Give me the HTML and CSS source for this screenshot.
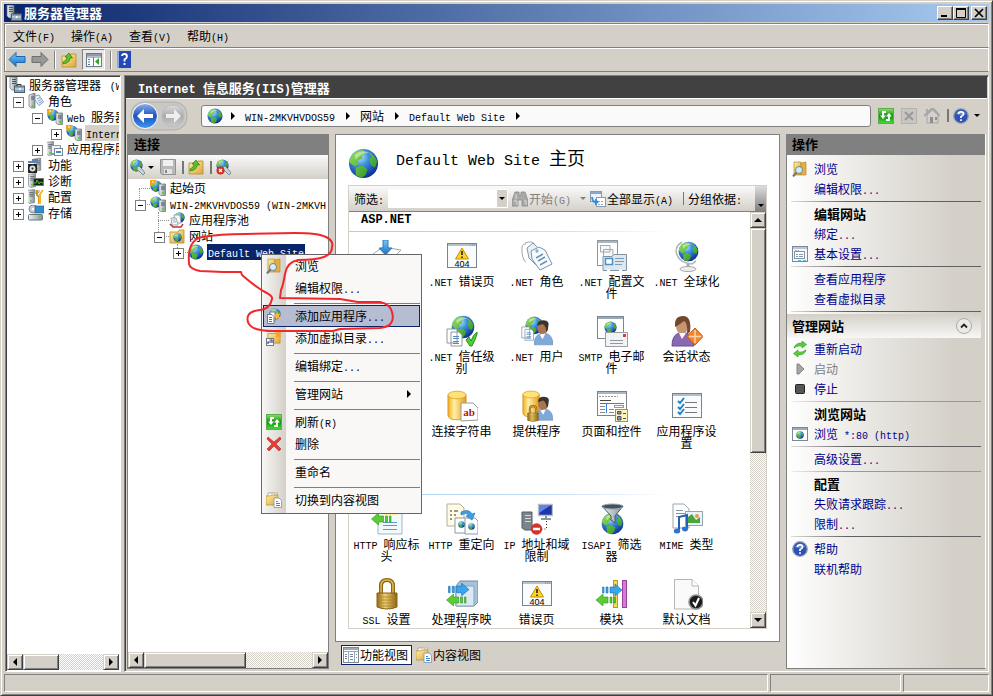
FILE: index.html
```html
<!DOCTYPE html>
<html lang="zh-CN">
<head>
<meta charset="utf-8">
<title>服务器管理器</title>
<link rel="stylesheet" href="styles.css">
</head>
<body>
<svg class="defs" aria-hidden="true">
  <defs>
    <radialGradient id="sea" cx=".38" cy=".28" r=".75"><stop offset="0" stop-color="#b4e6fb"/><stop offset=".4" stop-color="#3b8fe0"/><stop offset="1" stop-color="#0c2a8e"/></radialGradient>
    <linearGradient id="land" x1="0" y1="0" x2="1" y2="1"><stop offset="0" stop-color="#9be25a"/><stop offset="1" stop-color="#1f8a1c"/></linearGradient>
    <linearGradient id="gold" x1="0" x2="1"><stop offset="0" stop-color="#f2ae1c"/><stop offset=".35" stop-color="#fff0a8"/><stop offset="1" stop-color="#e69a10"/></linearGradient>
    <linearGradient id="brass" x1="0" x2="1"><stop offset="0" stop-color="#8d6512"/><stop offset=".4" stop-color="#f0d070"/><stop offset="1" stop-color="#8a6010"/></linearGradient>
    <linearGradient id="steel" x1="0" x2="1"><stop offset="0" stop-color="#f0f3f5"/><stop offset="1" stop-color="#87919b"/></linearGradient>
    <linearGradient id="fold" x1="0" y1="0" x2="1" y2="1"><stop offset="0" stop-color="#fff0a5"/><stop offset="1" stop-color="#dba63c"/></linearGradient>
    <linearGradient id="blue" x1="0" y1="0" x2="0" y2="1"><stop offset="0" stop-color="#7cc8f6"/><stop offset="1" stop-color="#1470c4"/></linearGradient>
    <linearGradient id="ball" x1="0" y1="0" x2="0" y2="1"><stop offset="0" stop-color="#8ab4ee"/><stop offset=".5" stop-color="#2350b8"/><stop offset="1" stop-color="#3d9bf0"/></linearGradient>
    <linearGradient id="ballg" x1="0" y1="0" x2="0" y2="1"><stop offset="0" stop-color="#ddd"/><stop offset=".5" stop-color="#aaa"/><stop offset="1" stop-color="#ccc"/></linearGradient>
    <linearGradient id="grn" x1="0" y1="0" x2="0" y2="1"><stop offset="0" stop-color="#8fe06a"/><stop offset=".5" stop-color="#109010"/><stop offset="1" stop-color="#45e03a"/></linearGradient>

    <symbol id="globe" viewBox="0 0 32 32"><circle cx="16" cy="16" r="15" fill="url(#sea)"/><path d="M3 9Q7 2 15 2L18 5 14 8 15 11 10 13 11 17 7 19 3 16 1 14ZM21 4Q28 7 30 14L28 20 24 18 22 12 24 9ZM8 20L15 18 20 22 18 28 14 31 8 28Z" fill="url(#land)"/><path d="M7 7Q14 1 22 5 14 5 8 12Z" fill="#fff" opacity=".45"/></symbol>
    <symbol id="server" viewBox="0 0 16 16"><path d="M4 1L12 0V15L6 16 4 14Z" fill="url(#steel)" stroke="#68727a" stroke-width=".7"/><path d="M6 3.500H11M6 5.500H11M6 7.500H11" stroke="#5b656d"/><rect x="7" y="12" width="2" height="2" fill="#52d42b"/></symbol>
    <symbol id="srvmgr" viewBox="0 0 16 16"><path d="M1 0H8V13H3L1 11Z" fill="url(#steel)" stroke="#68727a" stroke-width=".7"/><path d="M3 2.500H7M3 4.500H7M3 6.500H7" stroke="#4b555d"/><path d="M8 9V7.500H12V9" fill="none" stroke="#333"/><rect x="5.500" y="9" width="10" height="6.500" fill="#8ba2b8" stroke="#4a5f74"/><path d="M6 12H15" stroke="#dde6ee"/><rect x="10" y="11" width="1.500" height="2" fill="#fff"/></symbol>
    <symbol id="role" viewBox="0 0 16 16"><path d="M1 2L7 0V15H3L1 13Z" fill="url(#steel)" stroke="#68727a" stroke-width=".7"/><path d="M3 4H6M3 6H6" stroke="#4b555d"/><rect x="3.500" y="12" width="2" height="2" fill="#52d42b"/><path d="M7 3L11 2 15.500 9 11 12.500 7 7Z" fill="#eaf4fc" stroke="#6c8eaa" stroke-width=".8"/><path d="M9 6L12 4.500M10 8L13 6.500M11 10L14 8.500" stroke="#5b90ba" stroke-width=".8"/></symbol>
    <symbol id="srvglobe" viewBox="0 0 16 16"><use href="#globe" width="12" height="12"/><path d="M9 4H15.500V15.500H11L9 14Z" fill="url(#steel)" stroke="#68727a" stroke-width=".7"/><path d="M11 7H14.500M11 9H14.500" stroke="#4b555d"/><rect x="12" y="12" width="2" height="2" fill="#52d42b"/></symbol>
    <symbol id="websrv" viewBox="0 0 16 16"><use href="#srvglobe" width="16" height="16"/><path d="M0 0H6L5 3 2 5H0Z" fill="#f3a21a"/><path d="M2 2H4" stroke="#fff"/></symbol>
    <symbol id="appsrv" viewBox="0 0 16 16"><use href="#server" x="-4" width="14" height="15"/><rect x="4.500" y="4.500" width="9" height="8" fill="#edf3f8" stroke="#8a98a6"/><rect x="7.500" y="7.500" width="8" height="7" fill="#fff" stroke="#7a8896"/><path d="M9 11H14" stroke="#3b8bd6" stroke-width="2"/></symbol>
    <symbol id="feature" viewBox="0 0 16 16"><use href="#server" x="3" width="13" height="15"/><path d="M0 5H9V3H4" fill="none" stroke="#6482b0" stroke-width="2"/><rect y="7" width="9" height="9" fill="#222"/><circle cx="4.500" cy="11.500" r="3" fill="#ddd"/><circle cx="4.500" cy="11.500" r="1" fill="#222"/></symbol>
    <symbol id="diag" viewBox="0 0 16 16"><use href="#server" x="-3" width="14" height="15"/><rect x="5.500" y="5.500" width="10" height="7" fill="#182418" stroke="#777"/><path d="M6 10H8L9 7 11 11 12 9 15 10" stroke="#5fd64c" fill="none" stroke-width=".8"/></symbol>
    <symbol id="config" viewBox="0 0 16 16"><use href="#server" x="-4" width="14" height="15"/><path d="M9 1V6L11 8V15" stroke="#d69a17" stroke-width="2" fill="none"/><path d="M15 1L12 5V15" stroke="#f0b92e" stroke-width="2" fill="none"/><path d="M7 1V4L9 5 11 3V1" stroke="#8894a0" fill="none"/></symbol>
    <symbol id="storage" viewBox="0 0 16 16"><circle cx="5" cy="4" r="4" fill="#c8ced6" stroke="#7f8992"/><circle cx="5" cy="4" r="1.300" fill="#fff"/><rect x="7" y="1" width="9" height="7" fill="#2d8fce" stroke="#46607c" stroke-width=".7"/><rect x=".5" y="9.500" width="14" height="5.500" rx="1" fill="url(#steel)" stroke="#6b747c"/><rect x="11" y="11" width="2" height="2" fill="#52d42b"/></symbol>
    <symbol id="folder" viewBox="0 0 16 16"><path d="M1 4H9L10 2H15V15H1Z" fill="url(#fold)" stroke="#b98b2b" stroke-width=".8"/></symbol>
    <symbol id="upfolder" viewBox="0 0 16 16"><use href="#folder" width="16" height="16"/><path d="M2 12Q9 11 9 6H11.500L8 1 4 5H6Q6 9 2 10Z" fill="#59c22c" stroke="#2d7c14" stroke-width=".7"/></symbol>
    <symbol id="sites" viewBox="0 0 16 16"><use href="#folder" width="16" height="16"/><use href="#globe" x="4" y="5" width="9" height="9"/></symbol>
    <symbol id="pool" viewBox="0 0 16 16"><use href="#globe" x="5" width="11" height="11"/><path d="M5 3H11L12 11H6Z" fill="#f7fbff" stroke="#8693a0" stroke-width=".8"/><path d="M2 6H7L9 13H3Z" fill="#f7fbff" stroke="#8693a0" stroke-width=".8"/><path d="M3.500 8H6.500M4 10H7" stroke="#8693a0" stroke-width=".8"/><path d="M1 12L4 15H12L14 12" stroke="#b73a33" stroke-width="1.500" fill="none"/></symbol>
    <symbol id="connect" viewBox="0 0 16 16"><use href="#globe" width="13" height="13"/><path d="M7 8Q6 12 9 12L13 16 15 14 12 10 9 7Z" fill="#c8d4dc" stroke="#687a86" stroke-width=".8"/></symbol>
    <symbol id="disconnect" viewBox="0 0 16 16"><use href="#connect" width="16" height="16"/><circle cx="4.500" cy="11.500" r="4" fill="#d42b25"/><path d="M3 10L6 13M6 10L3 13" stroke="#fff" stroke-width="1.200"/></symbol>
    <symbol id="save" viewBox="0 0 16 16"><path d="M.5 .5H15.500V15.500H2L.5 14Z" fill="#b9b9b9" stroke="#929292"/><rect x="3" y="1" width="10" height="6" fill="#efefef"/><rect x="4" y="10" width="8" height="5" fill="#e2e2e2"/><path d="M6 11V14" stroke="#888" stroke-width="2"/></symbol>
    <symbol id="back" viewBox="0 0 18 16"><path d="M1 8L8 1V5H17V11H8V15Z" fill="url(#blue)" stroke="#1a68b0"/></symbol>
    <symbol id="next" viewBox="0 0 18 16"><path d="M17 8L10 1V5H1V11H10V15Z" fill="#989898" stroke="#6f6f6f"/></symbol>
    <symbol id="pane" viewBox="0 0 16 14"><rect x=".5" y=".5" width="15" height="13" fill="#fff" stroke="#6e7a8c"/><path d="M1 2H15" stroke="#8d9ab0" stroke-width="2"/><path d="M1 4H15M7.500 4V13" stroke="#6e7a8c"/><path d="M2 6.500H4M2 9H4M2 11.500H4" stroke="#3d7bc8"/><path d="M13 5V12L9 8.500Z" fill="#2ea328"/></symbol>
    <symbol id="book" viewBox="0 0 14 17"><path d="M0 0H14V17H0Z" fill="#2348b8"/><path d="M0 0H2V17H0Z" fill="#8aa6e4"/><path d="M5 5Q5 3 7.500 3T10 5.500Q10 7 7.500 8.500V10.500M7.500 12V14" stroke="#fff" stroke-width="1.800" fill="none"/></symbol>
    <symbol id="refresh" viewBox="0 0 16 16"><rect x=".5" y=".5" width="15" height="15" fill="url(#grn)" stroke="#5cae4d"/><path d="M8 4H5V8M8 12H11V8" stroke="#fff" stroke-width="1.800" fill="none"/><path d="M2 7.500H8L5 11ZM8 8.500H14L11 5Z" fill="#fff"/></symbol>
    <symbol id="stop" viewBox="0 0 16 16"><rect x=".5" y=".5" width="15" height="15" fill="#c7c6c2" stroke="#b4b2ad"/><path d="M4 4L12 12M12 4L4 12" stroke="#999" stroke-width="2"/></symbol>
    <symbol id="home" viewBox="0 0 16 16"><path d="M3 7V15H14V7L8.500 2Z" fill="#d3d1cd" stroke="#a5a5a5"/><path d="M0 8L8.500 0 16 8" stroke="#a6a6a6" stroke-width="2" fill="none"/><path d="M3 1V5" stroke="#aaa" stroke-width="2"/><path d="M6 9H9V15H6ZM11 9H13V12H11Z" fill="#8e8e8e"/></symbol>
    <symbol id="help" viewBox="0 0 16 16"><circle cx="8" cy="8" r="7.300" fill="#2d52b4" stroke="#9aa3b3" stroke-width="1.300"/><path d="M2.500 6Q8-1 13.500 6 8 8 2.500 6Z" fill="#88aaee" opacity=".6"/><path d="M5.500 6Q5.500 3.800 8 3.800T10.500 6Q10.500 7.500 8 8.500V10M8 11.200V13" stroke="#fff" stroke-width="1.700" fill="none"/></symbol>
    <symbol id="browse" viewBox="0 0 16 16"><path d="M2 1H9V14H2Z" fill="url(#fold)" stroke="#b98b2b" stroke-width=".7"/><path d="M9 2L14 1V14H9Z" fill="#e3b03d" stroke="#b98b2b" stroke-width=".7"/><circle cx="7" cy="9" r="3.500" fill="#d5ecfa" stroke="#6e8594"/><path d="M4.500 11.500L1 15.500" stroke="#6b7680" stroke-width="2"/></symbol>
    <symbol id="addapp" viewBox="0 0 16 16"><use href="#globe" x="3" width="12" height="12"/><path d="M4 4H9V13H4Z" fill="#fff" stroke="#6a7b8a"/><path d="M1.500 6.500H6L8 8.500V15.500H1.500Z" fill="#fff" stroke="#6a7b8a"/><path d="M3 9.500H6M3 11.500H6M3 13.500H6" stroke="#667"/><path d="M11 3L12 6 15 5.500 13 8 15 11 12 10 10 12 9.500 9.500 7.500 7.500 10 6Z" fill="#ffb733"/></symbol>
    <symbol id="addvdir" viewBox="0 0 16 16"><use href="#folder" x="1" width="14" height="14"/><path d="M12 0L13 3 16 3 14 5 15 8 12 6.500 9.500 8 10.500 5 8 3 11 3Z" fill="#ff9e25"/><rect x=".5" y="8.500" width="7" height="7" fill="#fff" stroke="#778"/><path d="M2 14V12H5M3.500 10H6V13" stroke="#1d3f98" fill="none" stroke-width="1.200"/></symbol>
    <symbol id="delete" viewBox="0 0 16 16"><path d="M2 1L8 6 14 1 15 3 10 8 15 13 13 15 8 10 3 15 1 13 6 8 1 3Z" fill="#e83b37" stroke="#b32522" stroke-width=".6"/></symbol>
    <symbol id="content" viewBox="0 0 16 16"><path d="M2 1H9V6H2ZM4 0H11V6" fill="#fff" stroke="#9b9482" stroke-width=".7"/><path d="M0 4H4L5 3H12V13H0Z" fill="url(#fold)" stroke="#b98b2b" stroke-width=".7"/><path d="M8 6H13L15.500 8.500V15.500H8Z" fill="#fff" stroke="#7890b0" stroke-width=".8"/><path d="M10 9.500H12M10 11.500H14M10 13.500H14" stroke="#3c86cc"/></symbol>
    <symbol id="fview" viewBox="0 0 16 16"><rect x=".5" y=".5" width="15" height="15" fill="#fff" stroke="#7c8797"/><path d="M1 2H15" stroke="#9dabbf" stroke-width="2"/><path d="M1 4.500H15M5.500 4V15M11.500 4V15" stroke="#9ba6b4"/><path d="M2 7.500H4M2 9.500H4M2 11.500H4M7 7.500H10M7 9.500H10M7 12.500H10M13 7.500H14M13 10.500H14" stroke="#75869c"/></symbol>
    <symbol id="settings" viewBox="0 0 16 16"><rect x=".5" y=".5" width="15" height="15" fill="#f5f8fa" stroke="#7c8797"/><path d="M1 2H15" stroke="#bac6d4" stroke-width="2"/><rect x="2.500" y="5.500" width="10" height="7" fill="#fff" stroke="#8895a6"/><path d="M3 5H7M4 8.500H6M7 8.500H11M4 10.500H6M7 10.500H11" stroke="#8895a6"/><path d="M6 14.500H9M11 14.500H14" stroke="#45c5ee"/></symbol>
    <symbol id="restart" viewBox="0 0 16 16"><path d="M2 7Q3 2 10 2V0L14.500 3.500 10 7V5Q6 4 2 7ZM14 9Q13 14 6 14V16L1.500 12.500 6 9V11Q10 12 14 9Z" fill="#58cf3a" stroke="#2b941b" stroke-width=".6"/></symbol>
    <symbol id="play" viewBox="0 0 16 16"><path d="M5 3H7L12 8 7 13H5Z" fill="#a6a6a6" stroke="#858585"/></symbol>
    <symbol id="halt" viewBox="0 0 16 16"><rect x="3.500" y="3.500" width="9" height="9" rx="1" fill="#555" stroke="#222"/></symbol>
    <symbol id="site80" viewBox="0 0 16 16"><rect x=".5" y="1.500" width="15" height="13" fill="#fff" stroke="#7c8797"/><path d="M1 3H15" stroke="#9dabbf" stroke-width="2"/><use href="#globe" x="4" y="5" width="8" height="8"/></symbol>
    <symbol id="binoc" viewBox="0 0 16 16"><path d="M3 1H7V4H9V1H13L16 10V15H10V9H6V15H0V10Z" fill="#a9a9a9" stroke="#888" stroke-width=".8"/><path d="M2 10H5V14M12 10H14V14M4 3V8" stroke="#ddd" fill="none"/></symbol>
    <symbol id="showall" viewBox="0 0 16 16"><rect x=".5" y=".5" width="11" height="10" fill="#eef3f9" stroke="#8a9ab0"/><path d="M1 2H11" stroke="#8da5c6" stroke-width="2"/><rect x="6.500" y="6.500" width="9" height="9" fill="#fff" stroke="#8a9ab0"/><path d="M8 10.500H14M8 13.500H14" stroke="#8ba6d0" stroke-dasharray="2 1"/><path d="M1 6Q2 12 5 12V14.500L9 11 5 7.500V10Q3 9 3 6Z" fill="#2e91e0"/></symbol>

    <symbol id="compile" viewBox="0 0 32 32"><path d="M2 14L12 7 30 10 20 20Z" fill="#fff" stroke="#9aa9b8"/><path d="M12 0H17V8H21L14.500 15 8 8H12Z" fill="url(#blue)" stroke="#2c7ec0"/></symbol>
    <symbol id="err404" viewBox="0 0 32 32"><rect x="1.500" y="3.500" width="29" height="24" fill="#fafbfc" stroke="#78838e"/><path d="M2 5H30" stroke="#b6c1cc" stroke-width="2"/><path d="M24 5H29" stroke="#5c88b8" stroke-dasharray="1 1"/><path d="M16 8L22.500 19H9.500Z" fill="#ffd320" stroke="#c48e10"/><path d="M16 11V15M16 16.500V18" stroke="#222" stroke-width="1.600"/><text x="16" y="27" class="t404">404</text></symbol>
    <symbol id="tags" viewBox="0 0 32 32"><path d="M5 4Q0 3 1 12T5 22M4 3Q12 0 14 5" stroke="#9ea8b0" fill="none"/><path d="M6 8L12 3 24 15 16 26 8 18Z" fill="#e9f1f8" stroke="#8296aa"/><path d="M10 11L18 7 24 10 31 24 19 30 11 19Z" fill="#f7fbfe" stroke="#7b92a8"/><circle cx="16" cy="11" r="1.700" fill="#8eb0cc"/><path d="M15 18L22 14M17 21L24 17M19 25L26 21" stroke="#6e93b5" stroke-width="1.500"/></symbol>
    <symbol id="profile" viewBox="0 0 32 32"><rect x="1.500" y=".5" width="20" height="25" fill="#fff" stroke="#8b96a0"/><path d="M2 2H21" stroke="#aab5c0" stroke-width="2"/><path d="M4.500 5.500H14V12H4.500ZM7.500 9.500H17V17H7.500Z" fill="#f5f7f8" stroke="#a1a8ae"/><path d="M7 16.500H16L18 14.500H30.500V30.500H7Z" fill="#dce7ee" stroke="#8095a4"/><rect x="9.500" y="18.500" width="7" height="6" fill="#fff" stroke="#4a90c4" stroke-width="1.500"/><path d="M19 18.500H28M19 21.500H28M19 24.500H26" stroke="#7f9cb4"/><path d="M11 30.500H14M23 30.500H26" stroke="#fff" stroke-width="2"/></symbol>
    <symbol id="globstand" viewBox="0 0 32 32"><path d="M11 2Q3 7 6 15T21 24L25 21" stroke="#b2b8bd" stroke-width="1.600" fill="none"/><use href="#globe" x="7" y="1" width="21" height="21"/><path d="M17 24V28" stroke="#a5abb0" stroke-width="3"/><ellipse cx="17" cy="29" rx="8" ry="2.500" fill="#eee" stroke="#aaa"/></symbol>
    <symbol id="globdoc" viewBox="0 0 32 32"><use href="#globe" x="5" y="0" width="24" height="24"/><path d="M1 14H11V28H1ZM5 17H13L16 20V31H5Z" fill="#fff" stroke="#8c98a4"/><path d="M7 21.500H13M7 23.500H13M7 26.500H13M7 28.500H13" stroke="#568ab8"/></symbol>
    <symbol id="trust" viewBox="0 0 32 32"><use href="#globdoc" width="32" height="32"/><path d="M20 25L23 22 25 26Q27 20 31 17Q32 19 26 31H24Z" fill="#4fcc36" stroke="#279118"/></symbol>
    <symbol id="person" viewBox="0 0 20 28"><path d="M0 27Q0 17 7 15H13Q20 17 20 27Z" fill="#7fa9d8" stroke="#6285ae" stroke-width=".6"/><ellipse cx="9" cy="9" rx="5.500" ry="7" fill="#a87550"/><path d="M3.500 7Q3 1 10 1T15 8Q15 12 13 14 13 7 9 5Z" fill="#3c332d"/><path d="M6 16L9 21 12 15" fill="#fff"/></symbol>
    <symbol id="users" viewBox="0 0 32 32"><use href="#globdoc" x="0" width="25" height="27"/><use href="#person" x="13" y="4" width="19" height="27"/></symbol>
    <symbol id="smtp" viewBox="0 0 32 32"><rect x="1.500" y="1.500" width="26" height="22" fill="#fff" stroke="#7b8792"/><path d="M2 3H27" stroke="#9ba8b5" stroke-width="2"/><use href="#globe" x="8" y="6" width="13" height="13"/><rect x="9.500" y="17.500" width="22" height="14" fill="#f2f3f4" stroke="#9a9fa4"/><rect x="27" y="19" width="3" height="3" fill="#e63b34"/><path d="M14 25.500H27M14 28.500H27" stroke="#8d9aa6"/></symbol>
    <symbol id="session" viewBox="0 0 32 32"><path d="M1 31Q1 20 8 18H15Q23 20 23 31Z" fill="#8a68b4" stroke="#6a4c92"/><ellipse cx="11" cy="11" rx="6" ry="8" fill="#c59672"/><path d="M4 12Q3 1 12 1T19 17L16 19Q17 8 13 6 8 10 4 12Z" fill="#72482f"/><path d="M8 18L11 24 15 18" fill="#fff"/><path d="M24 13L32 21.500 24 30 16 21.500Z" fill="#f5862c" stroke="#c85a12"/><path d="M24 15V28M18 21.500H30" stroke="#ffd6a8" stroke-width="1.500"/></symbol>
    <symbol id="db" viewBox="0 0 22 32"><path d="M1 5V26Q1 31 10.500 31T20 26V5Z" fill="url(#gold)" stroke="#c98b13" stroke-width=".8"/><ellipse cx="10.500" cy="5" rx="9.500" ry="4" fill="#ffe27a" stroke="#d79a1c" stroke-width=".8"/></symbol>
    <symbol id="connstr" viewBox="0 0 32 32"><use href="#db" x="1" width="21" height="31"/><path d="M15 13H27L32 18V30L15 31Z" fill="#fff" stroke="#9a9a9a"/><text x="23" y="26" class="tab">ab</text></symbol>
    <symbol id="lock" viewBox="0 0 24 32"><path d="M6 16V8Q6 2 12 2T18 8V16" fill="none" stroke="#8a6718" stroke-width="4"/><path d="M6 16V8Q6 2 12 2T18 8V16" fill="none" stroke="#e0bc54" stroke-width="1.500"/><path d="M2 15H22V29Q12 33 2 29Z" fill="url(#brass)" stroke="#86610f"/><path d="M2 19H22M2 22H22M2 25H22M2 28H22" stroke="#a8802a" stroke-width=".8"/></symbol>
    <symbol id="provider" viewBox="0 0 32 32"><use href="#db" x="1" width="19" height="28"/><use href="#person" x="14" y="5" width="18" height="27"/><use href="#lock" x="5" y="15" width="14" height="17"/></symbol>
    <symbol id="pages" viewBox="0 0 32 32"><rect x="1.500" y="1.500" width="29" height="24" fill="#fff" stroke="#79838d"/><path d="M2 3H30" stroke="#a9b6c3" stroke-width="2"/><path d="M3 6.500H22" stroke="#999" stroke-dasharray="2 1"/><path d="M4 10.500H15" stroke="#444"/><path d="M4 13.500H16" stroke="#e63a30"/><path d="M12 13.500H28M10.500 13V23" stroke="#3b80da"/><path d="M4 16.500H9M4 19.500H9M4 22.500H9M13 19.500H18M13 22.500H18" stroke="#888"/><rect x="18.500" y="15.500" width="9" height="2" fill="none" stroke="#7f9cba"/><rect x="19.500" y="19.500" width="12" height="12" fill="#fff4b8" stroke="#b8921d"/><path d="M21.500 21.500H25V24H21.500ZM21.500 26.500H25V30H21.500Z" fill="#89a" stroke="#456"/><path d="M27 23.500H30M27 28.500H30" stroke="#456"/></symbol>
    <symbol id="appset" viewBox="0 0 32 32"><rect x="1.500" y="3.500" width="29" height="24" fill="#fafbfc" stroke="#78838e"/><path d="M2 5H30" stroke="#aebdcc" stroke-width="2"/><path d="M14 12.500H26M14 17.500H26M14 22.500H26" stroke="#777"/><path d="M7 11L9 13 13 8M7 17L9 19 13 14M7 22L9 24 13 19" stroke="#1c84c8" stroke-width="2" fill="none"/></symbol>
    <symbol id="larrow" viewBox="0 0 20 12"><path d="M0 6L7 0V3H12V9H7V12ZM14 3H16V9H14ZM18 3H19.500V9H18Z" fill="#5ccc35" stroke="#2d961a" stroke-width=".6"/></symbol>
    <symbol id="rarrow" viewBox="0 0 20 12"><path d="M20 6L13 0V3H8V9H13V12ZM6 3H4V9H6ZM2 3H.5V9H2Z" fill="#38a6ea" stroke="#176eb4" stroke-width=".6"/></symbol>
    <symbol id="httphdr" viewBox="0 0 32 32"><path d="M7 1H31V31H7Z" fill="#f1f9fd" stroke="#9bb7c8"/><path d="M12 10H27" stroke="#ffe24b" stroke-width="3"/><path d="M12 19.500H26M12 22.500H26M12 26.500H26" stroke="#5e99cc"/><use href="#larrow" x="0" y="10" width="21" height="12"/></symbol>
    <symbol id="redirect" viewBox="0 0 32 32"><path d="M1 1H14L18 5V23H1Z" fill="#fffbe8" stroke="#b9af92"/><path d="M4 8H6M4 12H6M4 16H6M8 8H12M8 12H10" stroke="#776" stroke-width="1.500"/><path d="M9 15H19L23 19V30H9Z" fill="#fff" stroke="#8d99a5"/><path d="M19 15H29L32 18V31H19Z" fill="#fff" stroke="#8d99a5"/><use href="#globe" x="12" y="18" width="7" height="7"/><use href="#globe" x="22" y="20" width="7" height="7"/><path d="M15 9Q23 5 26 11L29 10 26 17 20 13 23 12Q20 9 15 12Z" fill="#3c9fe4" stroke="#1f70b0" stroke-width=".6"/></symbol>
    <symbol id="iprest" viewBox="0 0 32 32"><path d="M1 9H11V27H4L1 25Z" fill="#7c858c" stroke="#555d63"/><path d="M4 12.500H10M4 15.500H10M4 18.500H10" stroke="#d6dade"/><rect x="17.500" y="1.500" width="14" height="11" fill="#1d36a8" stroke="#b8bfc8" stroke-width="1.500"/><path d="M18 2H30L18 10Z" fill="#5f86e6"/><path d="M25 13V16M20 16H30" stroke="#8e959c" fill="none" stroke-width="2"/><path d="M25.500 18V26H21" stroke="#333" stroke-dasharray="1 2" fill="none"/><circle cx="15.500" cy="26" r="5.700" fill="#d6322d"/><path d="M12 26H19" stroke="#fff" stroke-width="2.500"/></symbol>
    <symbol id="isapi" viewBox="0 0 32 32"><use href="#globe" x="5" y="9" width="23" height="23"/><path d="M6 3H27L19 13V20L15 17V13Z" fill="url(#steel)" stroke="#4b565e"/><ellipse cx="16.500" cy="3.500" rx="10.500" ry="2.500" fill="#43525e" stroke="#9aa7b0"/></symbol>
    <symbol id="mime" viewBox="0 0 32 32"><path d="M2 1H13L18 6V25H2Z" fill="#fff" stroke="#9ba5ae"/><path d="M5 7.500H12M5 10.500H14M5 13.500H14" stroke="#8095a8"/><rect x="14.500" y="8.500" width="17" height="14" fill="#eaf3fa" stroke="#93a4b2"/><path d="M17 20V14L21 11 25 17 29 14V20Z" fill="#4aa63a"/><circle cx="26" cy="13" r="2" fill="#ef9a2b"/><path d="M8 28V14L16 12V26" stroke="#2461b4" stroke-width="2" fill="none"/><ellipse cx="6" cy="28" rx="3.200" ry="2.500" fill="#2f74cc"/><ellipse cx="14" cy="26" rx="3" ry="2.400" fill="#2f74cc"/></symbol>
    <symbol id="handler" viewBox="0 0 32 32"><path d="M10 8L14 3H32V24L28 28H10Z" fill="#a6c2dc" stroke="#6d8aa5"/><path d="M10 8H28V28H10Z" fill="#dce9f4" stroke="#86a0b8"/><use href="#rarrow" x="2" y="5" width="21" height="13"/><use href="#larrow" x="0" y="16" width="21" height="12"/></symbol>
    <symbol id="module" viewBox="0 0 32 32"><rect x="17.500" y="2.500" width="4" height="27" fill="#f5da55" stroke="#b99a20"/><rect x="26.500" y="2.500" width="4" height="27" fill="#d67ad6" stroke="#97429a"/><use href="#rarrow" x="6" y="6" width="20" height="12"/><use href="#larrow" x="0" y="16" width="20" height="12"/></symbol>
    <symbol id="defdoc" viewBox="0 0 32 32"><path d="M3.500 1.500H21L27.500 8V31H3.500Z" fill="#fafafa" stroke="#b4b4b4"/><path d="M21 1.500V8H27.500" fill="#fff" stroke="#b4b4b4"/><circle cx="25" cy="24" r="7" fill="#1c1c1c" stroke="#909090" stroke-width="1.500"/><path d="M22 24L24.500 27.500 28 20" stroke="#fff" stroke-width="2" fill="none"/></symbol>
  </defs>
</svg>

<div class="window">
  <header class="titlebar">
    <svg class="i16"><use href="#srvmgr"/></svg>
    <h1>服务器管理器</h1>
    <button class="cap" aria-label="最小化"><svg viewBox="0 0 12 10"><path d="M2 8H8" stroke="#000" stroke-width="2"/></svg></button>
    <button class="cap" aria-label="最大化"><svg viewBox="0 0 12 10"><path d="M1.500 1V9.500H10.500V1" stroke="#000" fill="none"/><path d="M1 1H11" stroke="#000" stroke-width="2"/></svg></button>
    <button class="cap last" aria-label="关闭"><svg viewBox="0 0 12 10"><path d="M2 1L10 9M10 1L2 9" stroke="#000" stroke-width="1.700"/></svg></button>
  </header>

  <nav class="menubar">
    <button><span>文件<span class="l">(F)</span></span></button>
    <button><span>操作<span class="l">(A)</span></span></button>
    <button><span>查看<span class="l">(V)</span></span></button>
    <button><span>帮助<span class="l">(H)</span></span></button>
  </nav>
  <div class="toolbar">
    <button aria-label="后退"><svg class="i18"><use href="#back"/></svg></button>
    <button aria-label="前进"><svg class="i18"><use href="#next"/></svg></button>
    <i class="vsep"></i>
    <button aria-label="向上"><svg class="i16"><use href="#upfolder"/></svg></button>
    <button class="pressed" aria-label="显示控制台树"><svg class="i16"><use href="#pane"/></svg></button>
    <i class="vsep"></i>
    <button aria-label="帮助"><svg class="book"><use href="#book"/></svg></button>
  </div>

  <main class="main">
    <section class="sunken side">
      <ul class="tree">
        <li><div class="row root"><svg class="i16"><use href="#srvmgr"/></svg><span>服务器管理器 <span class="l"> (W</span></span></div></li>
        <li><div class="row"><i class="tw minus"></i><svg class="i16"><use href="#role"/></svg><span>角色</span></div>
          <ul>
            <li><div class="row"><i class="tw minus"></i><svg class="i16"><use href="#websrv"/></svg><span><span class="l">Web </span>服务器</span></div>
              <ul><li><div class="row"><i class="tw plus"></i><svg class="i16"><use href="#websrv"/></svg><span class="hot"><span class="l">Internet</span></span></div></li></ul>
            </li>
            <li><div class="row"><i class="tw plus"></i><svg class="i16"><use href="#appsrv"/></svg><span>应用程序服</span></div></li>
          </ul>
        </li>
        <li><div class="row"><i class="tw plus"></i><svg class="i16"><use href="#feature"/></svg><span>功能</span></div></li>
        <li><div class="row"><i class="tw plus"></i><svg class="i16"><use href="#diag"/></svg><span>诊断</span></div></li>
        <li><div class="row"><i class="tw plus"></i><svg class="i16"><use href="#config"/></svg><span>配置</span></div></li>
        <li><div class="row"><i class="tw plus"></i><svg class="i16"><use href="#storage"/></svg><span>存储</span></div></li>
      </ul>
      <div class="hscroll"><button class="sb left" aria-label="向左"></button><i class="thumb t1"></i><button class="sb right" aria-label="向右"></button></div>
    </section>

    <section class="sunken iis">
      <h2 class="strip"><span class="lb">Internet </span>信息服务<span class="lb">(IIS)</span>管理器</h2>
      <div class="nav">
        <svg class="travel" viewBox="0 0 58 30"><path d="M14 1H44Q57 2 57 15T44 29H14Q1 28 1 15T14 1Z" fill="#c9c8c4" stroke="#b0aeaa"/><circle cx="15" cy="15" r="12.500" fill="url(#ball)" stroke="#fff"/><path d="M7 15L14 8V13H23V17H14V22Z" fill="#fff"/><circle cx="43" cy="15" r="11" fill="url(#ballg)" stroke="#bbb"/><path d="M51 15L44 8V13H36V17H44V22Z" fill="#eee"/></svg>
        <div class="address">
          <svg class="i16"><use href="#globe"/></svg><i class="tri"></i><span><span class="l">WIN-2MKVHVDOS59</span></span><i class="tri"></i><span>网站</span><i class="tri"></i><span><span class="l">Default Web Site</span></span><i class="tri"></i>
        </div>
        <button aria-label="刷新"><svg class="i16"><use href="#refresh"/></svg></button>
        <button aria-label="停止"><svg class="i16"><use href="#stop"/></svg></button>
        <button aria-label="主页"><svg class="i16"><use href="#home"/></svg></button>
        <i class="bar"></i>
        <button class="helpbtn" aria-label="帮助"><svg class="i16"><use href="#help"/></svg><i class="down"></i></button>
      </div>

      <div class="cols">
        <section class="conn">
          <h3 class="head">连接</h3>
          <div class="tools">
            <button aria-label="连接"><svg class="i16"><use href="#connect"/></svg><i class="down"></i></button>
            <button aria-label="保存"><svg class="i16"><use href="#save"/></svg></button>
            <i class="bar"></i>
            <button aria-label="向上"><svg class="i16"><use href="#upfolder"/></svg></button>
            <i class="bar"></i>
            <button aria-label="断开"><svg class="i16"><use href="#disconnect"/></svg></button>
          </div>
          <ul class="tree dotted">
            <li><div class="row"><i class="tw"></i><svg class="i16"><use href="#websrv"/></svg><span>起始页</span></div></li>
            <li><div class="row"><i class="tw minus"></i><svg class="i16"><use href="#srvglobe"/></svg><span><span class="l">WIN-2MKVHVDOS59 (WIN-2MKVH</span></span></div>
              <ul class="g2">
                <li><div class="row"><i class="tw"></i><svg class="i16"><use href="#pool"/></svg><span>应用程序池</span></div></li>
                <li><div class="row"><i class="tw minus"></i><svg class="i16"><use href="#sites"/></svg><span>网站</span></div>
                  <ul class="g3"><li><div class="row"><i class="tw plus"></i><svg class="i16"><use href="#globe"/></svg><span class="sel"><span class="l">Default Web Site</span></span></div></li></ul>
                </li>
              </ul>
            </li>
          </ul>
          <div class="hscroll"><button class="sb left" aria-label="向左"></button><i class="thumb t2"></i><button class="sb right" aria-label="向右"></button></div>
        </section>

        <section class="center">
          <div class="page">
            <div class="pagehead"><svg class="i31"><use href="#globe"/></svg><h2><span>Default Web Site </span>主页</h2></div>
            <div class="box">
              <div class="filter">
                <label for="q">筛选<span class="l">:</span></label>
                <div class="combo"><input id="q" type="text"><button aria-label="展开"><i class="down"></i></button></div>
                <button class="off"><svg class="i16"><use href="#binoc"/></svg><span>开始<span class="l">(G)</span></span><i class="down dim"></i></button>
                <button><svg class="i16"><use href="#showall"/></svg><span>全部显示<span class="l">(A)</span></span></button>
                <i class="bar"></i>
                <span>分组依据<span class="l">:</span></span>
                <button class="more" aria-label="更多"><i class="down white"></i></button>
              </div>
              <div class="scroller">
                <div class="list">
                  <h3 class="group">ASP.NET</h3>
                  <ul class="grid">
                    <li><a href="#"><svg><use href="#compile"/></svg></a></li>
                    <li><a href="#"><svg><use href="#err404"/></svg><span><span class="l">.NET </span>错误页</span></a></li>
                    <li><a href="#"><svg><use href="#tags"/></svg><span><span class="l">.NET </span>角色</span></a></li>
                    <li><a href="#"><svg><use href="#profile"/></svg><span><span class="l">.NET </span>配置文件</span></a></li>
                    <li><a href="#"><svg><use href="#globstand"/></svg><span><span class="l">.NET </span>全球化</span></a></li>
                    <li></li>
                    <li><a href="#"><svg><use href="#trust"/></svg><span><span class="l">.NET </span>信任级别</span></a></li>
                    <li><a href="#"><svg><use href="#users"/></svg><span><span class="l">.NET </span>用户</span></a></li>
                    <li><a href="#"><svg><use href="#smtp"/></svg><span><span class="l">SMTP </span>电子邮件</span></a></li>
                    <li><a href="#"><svg><use href="#session"/></svg><span>会话状态</span></a></li>
                    <li></li>
                    <li><a href="#"><svg><use href="#connstr"/></svg><span>连接字符串</span></a></li>
                    <li><a href="#"><svg><use href="#provider"/></svg><span>提供程序</span></a></li>
                    <li><a href="#"><svg><use href="#pages"/></svg><span>页面和控件</span></a></li>
                    <li><a href="#"><svg><use href="#appset"/></svg><span>应用程序设置</span></a></li>
                  </ul>
                  <div class="group"></div>
                  <ul class="grid">
                    <li><a href="#"><svg><use href="#httphdr"/></svg><span><span class="l">HTTP </span>响应标头</span></a></li>
                    <li><a href="#"><svg><use href="#redirect"/></svg><span><span class="l">HTTP </span>重定向</span></a></li>
                    <li><a href="#"><svg><use href="#iprest"/></svg><span><span class="l">IP </span>地址和域限制</span></a></li>
                    <li><a href="#"><svg><use href="#isapi"/></svg><span><span class="l">ISAPI </span>筛选器</span></a></li>
                    <li><a href="#"><svg><use href="#mime"/></svg><span><span class="l">MIME </span>类型</span></a></li>
                    <li><a href="#"><svg><use href="#lock"/></svg><span><span class="l">SSL </span>设置</span></a></li>
                    <li><a href="#"><svg><use href="#handler"/></svg><span>处理程序映射</span></a></li>
                    <li><a href="#"><svg><use href="#err404"/></svg><span>错误页</span></a></li>
                    <li><a href="#"><svg><use href="#module"/></svg><span>模块</span></a></li>
                    <li><a href="#"><svg><use href="#defdoc"/></svg><span>默认文档</span></a></li>
                  </ul>
                </div>
                <div class="vscroll"><button class="sb up" aria-label="向上"></button><i class="thumb t3"></i><button class="sb dn" aria-label="向下"></button></div>
              </div>
            </div>
          </div>
          <div class="tabs">
            <button class="on"><svg class="i16"><use href="#fview"/></svg>功能视图</button>
            <button><svg class="i16"><use href="#content"/></svg>内容视图</button>
          </div>
        </section>

        <aside class="actions">
          <h3 class="head">操作</h3>
          <div class="acts first">
            <a href="#"><svg class="i16"><use href="#browse"/></svg>浏览</a>
            <a href="#">编辑权限<span class="l">...</span></a>
            <hr>
            <h4>编辑网站</h4>
            <a href="#">绑定<span class="l">...</span></a>
            <a href="#"><svg class="i16"><use href="#settings"/></svg>基本设置<span class="l">...</span></a>
            <hr>
            <a href="#">查看应用程序</a>
            <a href="#">查看虚拟目录</a>
            <hr>
          </div>
          <h3 class="sub">管理网站<button aria-label="折叠"><svg viewBox="0 0 16 16"><circle cx="8" cy="8" r="7.500" fill="#eceae6" stroke="#aaa"/><path d="M5 9.500L8 6.500 11 9.500" stroke="#222" stroke-width="1.800" fill="none"/></svg></button></h3>
          <div class="acts">
            <a href="#"><svg class="i16"><use href="#restart"/></svg>重新启动</a>
            <a class="dis"><svg class="i16"><use href="#play"/></svg>启动</a>
            <a href="#"><svg class="i16"><use href="#halt"/></svg>停止</a>
            <hr class="soft">
            <h4>浏览网站</h4>
            <a href="#"><svg class="i16"><use href="#site80"/></svg>浏览<span class="l"> *:80 (http)</span></a>
            <hr>
            <a href="#">高级设置<span class="l">...</span></a>
            <hr class="soft">
            <h4>配置</h4>
            <a href="#">失败请求跟踪<span class="l">...</span></a>
            <a href="#">限制<span class="l">...</span></a>
            <hr>
            <a href="#"><svg class="i16"><use href="#help"/></svg>帮助</a>
            <a href="#">联机帮助</a>
          </div>
        </aside>
      </div>
    </section>
  </main>

  <footer class="status"><i></i><i></i><i></i></footer>
</div>

<div class="menu" role="menu">
  <button role="menuitem"><svg class="i16"><use href="#browse"/></svg>浏览</button>
  <button role="menuitem">编辑权限<span class="l">...</span></button>
  <hr>
  <button role="menuitem" class="cur"><svg class="i16"><use href="#addapp"/></svg>添加应用程序<span class="l">...</span></button>
  <button role="menuitem"><svg class="i16"><use href="#addvdir"/></svg>添加虚拟目录<span class="l">...</span></button>
  <hr>
  <button role="menuitem">编辑绑定<span class="l">...</span></button>
  <hr>
  <button role="menuitem">管理网站<i class="tri"></i></button>
  <hr>
  <button role="menuitem"><svg class="i16"><use href="#refresh"/></svg>刷新<span class="l">(R)</span></button>
  <button role="menuitem"><svg class="i16"><use href="#delete"/></svg>删除</button>
  <hr>
  <button role="menuitem">重命名</button>
  <hr>
  <button role="menuitem"><svg class="i16"><use href="#content"/></svg>切换到内容视图</button>
</div>

<svg class="ink" viewBox="0 0 250 150" aria-hidden="true"><path d="M9 39Q8 25 12 19T22 12Q40 9 65 9L115 8Q138 8 146 12T152 22Q152 29 144 32T118 35Q107 37 105 49T101 65L100 73L160 74L178 77L200 77Q210 79 212 87T211 98Q209 102 200 103L160 104L153 106L94 106Q78 106 72 102T68 91Q70 86 80 85T92 74Q93 71 85 67T62 50L61 47L43 47L20 46Q10 44 9 39Z"/></svg>
</body>
</html>
```
FILE: styles.css
```css
* { box-sizing: border-box; }

body {
  margin: 0;
  background: #d4d0c8;
  color: #000;
  font: 12px/16px "Noto Sans CJK SC", sans-serif;
}

h1, h2, h3, h4, ul { margin: 0; padding: 0; font-size: 13px; font-weight: bold; }
ul { list-style: none; font-size: 12px; font-weight: normal; }
button { margin: 0; padding: 0; border: 0; background: none; color: inherit; font: inherit; display: flex; align-items: center; }
a { color: #00008b; text-decoration: none; }
i { display: block; flex: none; }
svg { display: block; flex: none; }

.defs { position: absolute; width: 0; height: 0; }
.l { font-family: "Liberation Mono", monospace; font-size: 10px; line-height: 0; white-space: pre; }
.lb { font-family: "Liberation Mono", monospace; font-size: 12px; line-height: 0; white-space: pre; }
.i16 { width: 16px; height: 16px; }
.i18 { width: 18px; height: 17px; }
.i31 { width: 31px; height: 31px; }
.book { width: 14px; height: 17px; }
.t404 { font: 9px "Liberation Sans", sans-serif; text-anchor: middle; }
.tab { font: bold 11px "Liberation Serif", serif; text-anchor: middle; fill: #a61c1c; }

.window {
  display: flex;
  flex-direction: column;
  height: 100vh;
  padding: 3px;
  border: 1px solid;
  border-color: #d4d0c8 #404040 #404040 #d4d0c8;
  box-shadow: inset 1px 1px #fff, inset -1px -1px #808080;
}

.titlebar {
  display: flex;
  align-items: center;
  height: 18px;
  padding: 0 2px;
  background: linear-gradient(to right, #0a246a, #a6caf0);
  color: #fff;
}
.titlebar h1 { flex: 1; margin-left: 2px; line-height: 18px; }
.cap {
  width: 16px;
  height: 14px;
  padding: 1px;
  background: #d4d0c8;
  border: 1px solid;
  border-color: #fff #404040 #404040 #fff;
  box-shadow: inset -1px -1px #808080;
}
.cap svg { width: 12px; height: 10px; }
.cap.last { margin-left: 2px; }

.menubar, .toolbar {
  display: flex;
  align-items: center;
  border: 1px solid #808080;
  border-right-color: #fff;
  box-shadow: inset 1px 1px #fff;
}
.menubar { height: 25px; margin-top: 1px; }
.menubar button { padding: 0 8px; }
.toolbar { height: 24px; gap: 5px; padding-left: 3px; border-top: 0; border-bottom-color: #808080; }
.toolbar .pressed { width: 23px; height: 21px; justify-content: center; border: 1px solid; border-color: #808080 #fff #fff #808080; background: #eae8e4; }
.vsep { width: 2px; height: 18px; border-left: 1px solid #808080; border-right: 1px solid #fff; }

.main { flex: 1; min-height: 0; display: grid; grid-template-columns: 116px minmax(0, 1fr); gap: 3px; margin: 3px 0 2px; padding-left: 1px; }
.sunken {
  display: flex;
  flex-direction: column;
  min-height: 0;
  padding: 1px;
  border: 1px solid;
  border-color: #808080 #fff #fff #808080;
  box-shadow: inset 1px 1px #404040;
}
.side { background: #fff; }

.tree { flex: 1; min-height: 0; overflow: hidden; white-space: nowrap; }
.tree ul { padding-left: 19px; position: relative; }
.row { display: flex; align-items: center; height: 16px; padding-left: 6px; }
.row.root { padding-left: 2px; }
.row svg + span { margin-left: 4px; }
.tw { position: relative; width: 15px; height: 9px; }
.plus::before, .minus::before {
  content: "";
  position: absolute;
  z-index: 1;
  width: 9px;
  height: 9px;
  border: 1px solid #808080;
  background: linear-gradient(#000, #000) 50% 50% / 5px 1px no-repeat #fff;
}
.plus::before { background: linear-gradient(#000, #000) 50% 50% / 5px 1px no-repeat, linear-gradient(#000, #000) 50% 50% / 1px 5px no-repeat #fff; }
.row .hot { margin-left: 3px; padding-left: 1px; background: #d4d0c8; }
.row .sel { margin-left: 3px; padding: 0 1px; background: #0a246a; color: #fff; }

.dotted { position: relative; padding-top: 1px; }
.dotted .row { padding-left: 7px; }
.dotted .tw::after { content: ""; position: absolute; left: 4px; right: 0; top: 4px; border-top: 1px dotted #909090; }
.dotted::before, .g2::before, .g3::before { content: ""; position: absolute; left: 11px; top: 9px; height: 16px; border-left: 1px dotted #909090; }
.tree .g2::before, .tree .g3::before { left: 30px; top: 0; height: 24px; }
.tree .g3::before { height: 8px; }

.hscroll, .vscroll { display: flex; flex: none; background: repeating-conic-gradient(#fff 0 25%, #d4d0c8 0 50%) 0 0 / 2px 2px; }
.hscroll { height: 16px; }
.vscroll { width: 16px; flex-direction: column; }
.sb, .thumb { background: #d4d0c8; border: 1px solid; border-color: #d4d0c8 #404040 #404040 #d4d0c8; box-shadow: inset 1px 1px #fff, inset -1px -1px #808080; }
.sb { width: 16px; height: 16px; flex: none; justify-content: center; }
.sb::before { content: ""; border: 4px solid transparent; }
.sb.left::before { border-right-color: #000; border-left-width: 0; }
.sb.right::before { border-left-color: #000; border-right-width: 0; }
.sb.up::before { border-bottom-color: #000; border-top-width: 0; }
.sb.dn::before { border-top-color: #000; border-bottom-width: 0; }
.sb.right { margin-left: auto; }
.sb.dn { margin-top: auto; }
.t1 { width: 32%; }
.t2 { width: 51%; }
.t3 { height: 54%; }

.strip { height: 22px; flex: none; padding-left: 12px; background: #414141; color: #fff; line-height: 21px; border-bottom: 1px solid #fff; }
.nav { display: flex; align-items: center; gap: 7px; height: 35px; flex: none; padding: 0 7px 2px 4px; }
.travel { width: 58px; height: 30px; margin-right: 6px; }
.address { flex: 1; display: flex; align-items: center; height: 22px; padding-left: 5px; background: #fafafa; border: 1px solid #808080; border-radius: 3px; }
.tri { width: 4px; height: 8px; margin: 0 10px 0 11px; border: 4px solid transparent; border-left-color: #000; border-right: 0; }
.address svg + .tri { margin-left: 8px; }
.down { width: 6px; height: 3px; border: 3px solid transparent; border-top-color: #000; border-bottom: 0; }
.bar { width: 2px; height: 13px; background: #777; }
.helpbtn { gap: 5px; margin-left: -3px; }

.cols { flex: 1; min-height: 0; display: grid; grid-template-columns: 202px minmax(0, 1fr) 200px; gap: 6px; padding: 0 1px 1px; }
.head { height: 21px; flex: none; padding-left: 6px; line-height: 20px; background: #808080; }

.conn { display: flex; flex-direction: column; min-height: 0; min-width: 0; border: 1px solid #808080; border-top: 0; background: #fff; }
.tools { display: flex; align-items: center; gap: 6px; height: 24px; flex: none; padding-left: 2px; background: linear-gradient(#fafafa, #d4d0c8); }
.tools button { gap: 2px; }
.tools .bar { margin-right: -2px; }

.center { display: flex; flex-direction: column; min-height: 0; }
.page { flex: 1; min-height: 0; display: flex; flex-direction: column; padding: 0 12px 12px; background: #fff; border: 1px solid #808080; }
.pagehead { display: flex; padding: 13px 0 6px; gap: 17px; }
.pagehead h2 { font-size: 18px; font-weight: normal; line-height: 18px; }
.pagehead h2 span { font: 15px/0 "Liberation Mono", monospace; white-space: pre; }
.box { flex: 1; min-height: 0; display: flex; flex-direction: column; border: 1px solid #d4d0c8; }
.filter { display: flex; align-items: center; height: 26px; flex: none; padding-left: 5px; border-bottom: 1px solid #808080; background: linear-gradient(#fafafa, #d4d0c8); white-space: nowrap; gap: 4px; }
.filter button { gap: 1px; }
.combo { display: flex; width: 120px; height: 19px; background: #fff; border: 1px solid #fff; }
.combo input { flex: 1; min-width: 0; border: 0; padding: 0 2px; background: none; font: inherit; outline: 0; }
.combo button { width: 10px; height: 17px; justify-content: center; background: #d4d0c8; }
.off { color: #808080; }
.down.dim { border-top-color: #808080; margin: 0 0 0 8px; }
.filter .bar { width: 1px; margin-left: 6px; }
.filter .more { align-self: stretch; width: 11px; margin-left: auto; padding-bottom: 4px; align-items: flex-end; justify-content: center; background: linear-gradient(#ddd, #808080); }
.down.white { border-top-color: #000; }

.scroller { flex: 1; min-height: 0; display: flex; }
.list { flex: 1; min-width: 0; overflow: hidden; }
.group { height: 20px; padding-left: 12px; font: bold 12px/16px "Liberation Mono", monospace; border-bottom: 1px solid; border-image: linear-gradient(to right, #a8cdf0, #c6def5 50%, #fff 80%) 1; }
.grid { display: grid; grid-template-columns: repeat(auto-fill, 75px); grid-auto-rows: 75px; padding-top: 8px; }
.grid + .group { margin-top: 10px; }
.grid a { display: flex; flex-direction: column; align-items: center; gap: 3px; color: #000; text-align: center; line-height: 12px; }
.grid a > svg { width: 32px; height: 32px; }
.grid a > span { width: 70px; }

.tabs { display: flex; gap: 2px; height: 27px; flex: none; padding: 3px 6px 4px; }
.tabs button { padding: 0 3px 0 1px; gap: 1px; border: 1px solid transparent; }
.tabs .on { background: #fff; border-color: #0a246a; }

.actions { display: flex; flex-direction: column; min-height: 0; border: 1px solid #808080; border-top: 0; border-right-color: #fff; background: linear-gradient(to right, #fff, #e7e5e0 45%, #d4d0c8 85%); }
.actions .head { padding-left: 5px; }
.acts.first { padding-top: 4px; }
.acts a, .acts h4 { position: relative; display: block; height: 20px; padding-left: 27px; line-height: 20px; }
.acts a svg { position: absolute; left: 5px; top: 2px; }
.acts .dis { color: #808080; }
.acts hr { height: 1px; margin: 2px 4px; border: 0; background: linear-gradient(to right, #ddd, #606060 30%); }
.acts .soft { background: linear-gradient(to right, #eee, #999 30%); }
.sub { display: flex; align-items: center; justify-content: space-between; height: 24px; margin: 0 4px 1px 0; padding: 0 9px 0 5px; background: linear-gradient(to top, #f8f7f5, #d4d0c8); }
.sub svg { width: 16px; height: 16px; }

.status { display: flex; gap: 2px; height: 18px; }
.status i { border: 1px solid; border-color: #808080 #fff #fff #808080; flex: 1; }
.status i:nth-child(2) { flex: 0 0 131px; }
.status i:nth-child(3) { flex: 0 0 86px; }

.menu {
  position: absolute;
  left: 261px;
  top: 254px;
  width: 161px;
  padding: 0 1px 2px;
  border: 1px solid #666;
  background: linear-gradient(to right, #f8f7f5, #d4d0c8 24px, #f9f8f7 24px);
}
.menu button { display: block; position: relative; width: 100%; height: 22px; padding-left: 32px; line-height: 22px; text-align: left; }
.menu button svg { position: absolute; left: 3px; top: 3px; }
.menu .cur { padding-left: 31px; background: #b6bdd2; border: 1px solid #0a246a; line-height: 20px; }
.menu .cur svg { left: 2px; top: 2px; }
.menu hr { height: 1px; margin: 4px 0 1px 31px; border: 0; background: #808080; }
.menu .tri { position: absolute; right: 9px; top: 7px; margin: 0; }

.ink { position: absolute; left: 180px; top: 225px; width: 250px; height: 150px; pointer-events: none; fill: none; stroke: #f0282c; stroke-width: 2; stroke-linejoin: round; }
```
